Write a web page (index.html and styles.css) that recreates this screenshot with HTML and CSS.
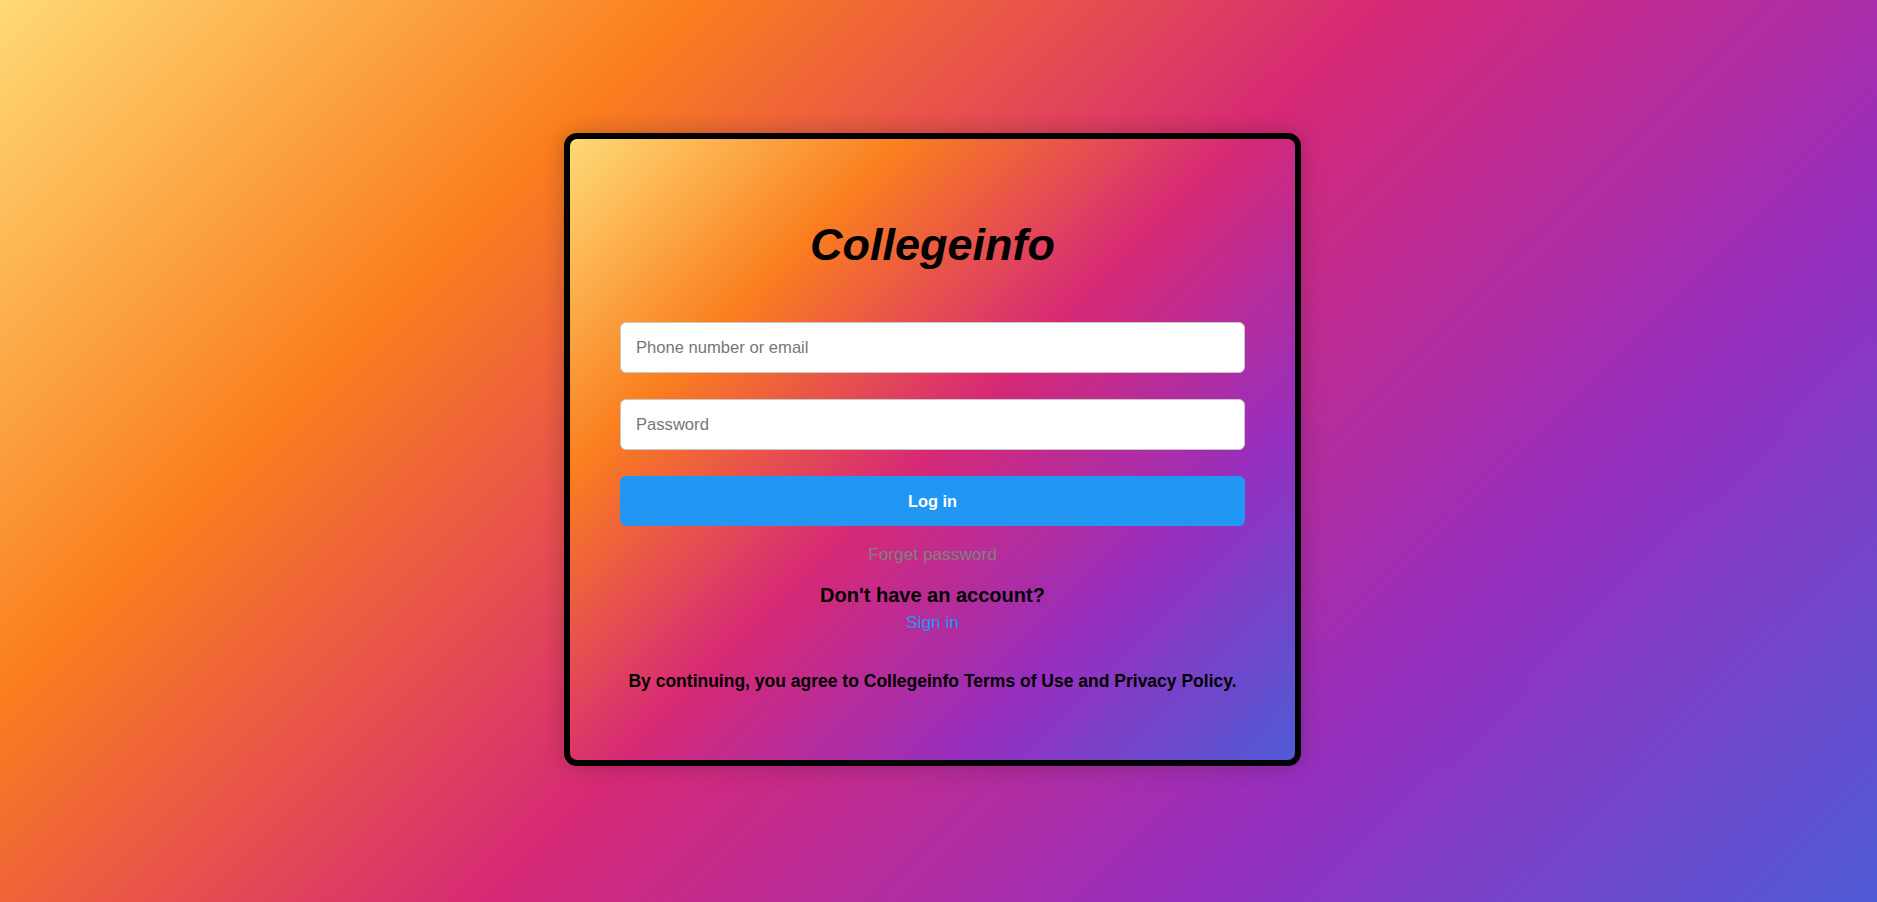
FILE: index.html
```html
<!DOCTYPE html>
<html lang="en">
<head>
<meta charset="utf-8">
<title>Collegeinfo</title>
<link rel="stylesheet" href="styles.css">
</head>
<body>
<div class="page">
  <div class="card">
    <h1 class="title">Collegeinfo</h1>
    <form class="form">
      <input class="field" type="text" placeholder="Phone number or email">
      <input class="field" type="password" placeholder="Password">
      <button class="btn" type="button">Log in</button>
    </form>
    <a class="forget" href="#">Forget password</a>
    <p class="question">Don't have an account?</p>
    <a class="signin" href="#">Sign in</a>
    <p class="terms">By continuing, you agree to Collegeinfo Terms of Use and Privacy Policy.</p>
  </div>
</div>
</body>
</html>
```

FILE: styles.css
```css
* { box-sizing: border-box; }
html, body { margin: 0; padding: 0; height: 100%; }
body {
  font-family: "Liberation Sans", Arial, sans-serif;
  background: linear-gradient(135deg, #feda75 0%, #fa7e1e 25%, #d62976 50%, #962fbf 75%, #4f5bd5 100%);
  min-height: 100vh;
}
.page {
  min-height: 100vh;
  display: flex;
  justify-content: center;
  align-items: center;
  padding-right: 12px;
  padding-bottom: 3px;
}
.card {
  width: 737px;
  border: 6px solid #000;
  border-radius: 13px;
  padding: 50px 50px 50px;
  background: linear-gradient(135deg, #feda75 0%, #fa7e1e 25%, #d62976 50%, #962fbf 75%, #4f5bd5 100%);
  box-shadow: 0 0 22px rgba(0, 0, 0, 0.22);
  display: flex;
  flex-direction: column;
  align-items: center;
  text-align: center;
}
.title {
  margin: 30px 0 0;
  font-size: 45px;
  font-style: italic;
  font-weight: bold;
  color: #000;
  line-height: normal;
}
.form {
  width: 100%;
  display: flex;
  flex-direction: column;
  gap: 26px;
  margin-top: 51px;
}
.field {
  width: 100%;
  height: 51px;
  border: 1px solid #c8c8c8;
  border-radius: 6px;
  background: #fff;
  padding: 0 15px;
  font-family: "Liberation Sans", Arial, sans-serif;
  font-size: 16.6px;
  color: #333;
  outline: none;
}
.field::placeholder { color: #767676; }
.btn {
  width: 100%;
  height: 50px;
  border: none;
  border-radius: 6px;
  background: #2196f3;
  color: #fff;
  font-family: "Liberation Sans", Arial, sans-serif;
  font-weight: bold;
  font-size: 16.4px;
  cursor: pointer;
}
.forget {
  margin-top: 18px;
  font-size: 17.3px;
  color: #808080;
  text-decoration: none;
  line-height: normal;
}
.question {
  margin: 19px 0 0;
  font-size: 20px;
  font-weight: bold;
  color: #000;
  line-height: normal;
}
.signin {
  margin-top: 5px;
  font-size: 17.3px;
  color: #2196f3;
  text-decoration: none;
  line-height: normal;
}
.terms {
  margin: 38px 0 18px;
  font-size: 17.5px;
  font-weight: bold;
  color: #000;
  line-height: normal;
}
```
